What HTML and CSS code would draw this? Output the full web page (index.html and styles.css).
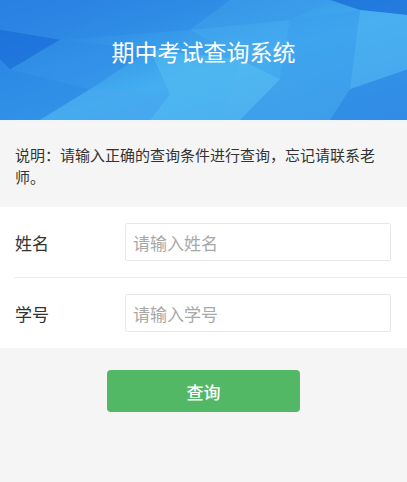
FILE: index.html
```html
<!DOCTYPE html>
<html lang="zh-CN">
<head>
<meta charset="utf-8">
<title>期中考试查询系统</title>
<link rel="stylesheet" href="styles.css">
</head>
<body>
<header class="banner">
  <svg class="banner-bg" viewBox="0 0 407 121" preserveAspectRatio="none" aria-hidden="true">
    <defs>
      <linearGradient id="g" x1="0" y1="0" x2="1" y2="1">
        <stop offset="0" stop-color="#1f74dc"/>
        <stop offset="0.55" stop-color="#44aef0"/>
        <stop offset="1" stop-color="#3a98e8"/>
      </linearGradient>
    </defs>
    <rect width="407" height="121" fill="url(#g)"/>
    <polygon points="0,0 120,0 60,40 0,30" fill="#2d86e4" opacity="0.7"/>
    <polygon points="0,30 60,40 10,70 0,60" fill="#1c6fd8" opacity="0.8"/>
    <polygon points="60,40 150,50 90,90 10,70" fill="#2f8ae6" opacity="0.6"/>
    <polygon points="0,60 10,70 90,90 40,121 0,121" fill="#2a86e4" opacity="0.7"/>
    <polygon points="90,90 170,95 150,121 40,121" fill="#4aa8ee" opacity="0.6"/>
    <polygon points="120,0 230,0 190,30 60,40" fill="#2b88e6" opacity="0.5"/>
    <polygon points="150,50 240,60 220,121 150,121 170,95" fill="#55bdf3" opacity="0.55"/>
    <polygon points="190,30 290,20 280,80 240,60" fill="#45aaf0" opacity="0.5"/>
    <polygon points="230,0 330,0 290,20 190,30" fill="#3b9bea" opacity="0.6"/>
    <polygon points="330,0 407,0 407,15 360,10" fill="#1a6fd8" opacity="0.8"/>
    <polygon points="290,20 360,10 350,90 280,80" fill="#3c9fec" opacity="0.6"/>
    <polygon points="360,10 407,15 407,70 350,90" fill="#4fb0f0" opacity="0.55"/>
    <polygon points="280,80 350,90 330,121 240,121" fill="#3e9ee9" opacity="0.5"/>
    <polygon points="350,90 407,70 407,121 330,121" fill="#2a83e2" opacity="0.6"/>
    <polygon points="220,121 240,60 280,80 240,121" fill="#60c4f5" opacity="0.45"/>
  </svg>
  <h1 class="banner-title">期中考试查询系统</h1>
</header>

<section class="notice">
  说明：请输入正确的查询条件进行查询，忘记请联系老师。
</section>

<form class="form">
  <div class="row">
    <label class="label" for="name">姓名</label>
    <input class="field" id="name" type="text" placeholder="请输入姓名">
  </div>
  <div class="row">
    <label class="label" for="sid">学号</label>
    <input class="field" id="sid" type="text" placeholder="请输入学号">
  </div>
</form>

<div class="actions">
  <button class="btn" type="button">查询</button>
</div>
</body>
</html>
```

FILE: styles.css
```css
* { box-sizing: border-box; }

html, body {
  margin: 0;
  padding: 0;
  background: #f5f5f5;
  font-family: "Noto Sans CJK SC", "Noto Sans", sans-serif;
  color: #333;
}

.banner {
  position: relative;
  height: 121px;
  overflow: hidden;
  border-bottom: 1px solid #eef4fb;
}

.banner-bg {
  position: absolute;
  left: 0;
  top: 0;
  width: 100%;
  height: 100%;
  display: block;
}

.banner-title {
  position: relative;
  margin: 0;
  padding-top: 39px;
  text-align: center;
  font-size: 23px;
  line-height: 24px;
  font-weight: 400;
  color: #fff;
}

.notice {
  background: #f5f5f5;
  padding: 23px 20px 19px 15px;
  font-size: 15px;
  line-height: 22px;
  color: #333;
}

.form {
  background: #fff;
  padding-left: 14px;
  margin: 0;
}

.row {
  display: flex;
  align-items: center;
  padding: 16px 16px 16px 1px;
}

.row + .row {
  border-top: 1px solid #ececec;
}

.label {
  width: 110px;
  flex: none;
  font-size: 17px;
  color: #333;
}

.field {
  flex: 1;
  min-width: 0;
  height: 38px;
  border: 1px solid #e8e8e8;
  border-radius: 2px;
  padding: 0 7px;
  font-family: inherit;
  font-size: 17px;
  color: #333;
  background: #fff;
  outline: none;
}

.field::placeholder {
  color: #a8a8a8;
}

.actions {
  display: flex;
  justify-content: center;
  padding-top: 22px;
}

.btn {
  width: 193px;
  height: 42px;
  border: none;
  border-radius: 4px;
  background: #53b866;
  color: #fff;
  font-family: inherit;
  font-size: 17px;
  font-weight: 500;
}
```
